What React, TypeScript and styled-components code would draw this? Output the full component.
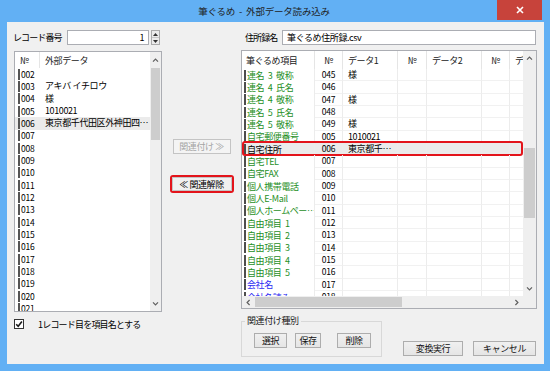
import React from "react";
import styled, { createGlobalStyle, css } from "styled-components";

const GlobalStyle = createGlobalStyle`
  html, body { margin: 0; padding: 0; background: #ffffff; }
  body {
    font-family: "Noto Sans CJK JP", "Noto Sans", "Liberation Sans", sans-serif;
    font-size: 9px;
    letter-spacing: -0.4px;
    color: #000;
  }
  * { box-sizing: border-box; }
`;

/* ---------- window frame ---------- */
const Window = styled.div`
  width: 550px;
  height: 371px;
  background: #62b0f4;
  display: flex;
  flex-direction: column;
`;

const TitleBar = styled.div`
  height: 22px;
  flex: none;
  display: grid;
  grid-template-columns: 1fr auto 1fr;
  align-items: start;
`;

const Title = styled.div`
  grid-column: 2;
  height: 22px;
  line-height: 22px;
  font-size: 9.5px;
  letter-spacing: -0.2px;
  word-spacing: 2px;
  color: #1e1e1e;
  white-space: nowrap;
  margin-right: 22px;
`;

const CloseButton = styled.div`
  grid-column: 3;
  justify-self: end;
  margin-right: 8px;
  width: 45px;
  height: 20px;
  background: #c7433b;
  display: flex;
  align-items: center;
  justify-content: center;
`;

const Client = styled.div`
  flex: 1;
  margin: 0 6px 7px 7px;
  background: #f0f0f0;
  display: flex;
  padding: 8px 0 0 7px;
`;

/* ---------- shared controls ---------- */
const TopRow = styled.div`
  height: 15px;
  display: flex;
  align-items: center;
`;

const Label = styled.div<{ $w: number; $ml?: number }>`
  width: ${(p) => p.$w}px;
  margin-left: ${(p) => p.$ml ?? 0}px;
  white-space: nowrap;
  letter-spacing: -0.9px;
`;

const TextBox = styled.div<{ $w: number; $right?: boolean }>`
  width: ${(p) => p.$w}px;
  height: 15px;
  border: 1px solid #abadb3;
  background: #fff;
  line-height: 13px;
  padding: 0 4px;
  text-align: ${(p) => (p.$right ? "right" : "left")};
  white-space: nowrap;
`;

const Spinner = styled.div`
  margin-left: 2px;
  width: 9px;
  height: 15px;
  border: 1px solid #acacac;
  background: #ececec;
  display: flex;
  flex-direction: column;
`;

const SpinHalf = styled.div<{ $bottom?: boolean }>`
  flex: 1;
  display: flex;
  align-items: center;
  justify-content: center;
  ${(p) => p.$bottom && css`border-top: 1px solid #c8c8c8;`}
`;

const Tri = styled.svg<{ $down?: boolean }>`
  transform: rotate(${(p) => (p.$down ? 180 : 0)}deg);
`;

const ChevronSvg = styled.svg<{ $rot: number }>`
  transform: rotate(${(p) => p.$rot}deg);
`;

type Dir = "up" | "down" | "left" | "right";
const rotations: Record<Dir, number> = { up: 0, right: 90, down: 180, left: 270 };

const Chevron = ({ dir }: { dir: Dir }) => (
  <ChevronSvg $rot={rotations[dir]} width="7" height="7" viewBox="0 0 7 7">
    <path d="M1 4.6 L3.5 2.1 L6 4.6" fill="none" stroke="#606060" strokeWidth="1.2" />
  </ChevronSvg>
);

const PushButton = styled.div<{ $w: number; $ml?: number }>`
  width: ${(p) => p.$w}px;
  height: 15px;
  margin-left: ${(p) => p.$ml ?? 0}px;
  border: 1px solid #adadad;
  background: linear-gradient(#f0f0f0, #e5e5e5);
  display: flex;
  align-items: center;
  justify-content: center;
  white-space: nowrap;
  color: #111;
`;

/* ---------- scrollbars ---------- */
const VScroll = styled.div`
  background: #efefef;
  display: flex;
  flex-direction: column;
  overflow: hidden;
`;

const ArrowCell = styled.div<{ $h?: number; $w?: number }>`
  flex: none;
  height: ${(p) => (p.$h ? `${p.$h}px` : "auto")};
  width: ${(p) => (p.$w ? `${p.$w}px` : "auto")};
  display: flex;
  align-items: center;
  justify-content: center;
`;

const VTrack = styled.div`
  flex: 1;
  display: flex;
  flex-direction: column;
`;

const VThumb = styled.div<{ $top: number; $h: number }>`
  margin: ${(p) => p.$top}px 1px 0 1px;
  height: ${(p) => p.$h}px;
  background: #cdcdcd;
`;

const HScroll = styled.div`
  background: #efefef;
  display: flex;
  align-items: stretch;
`;

const HTrack = styled.div`
  flex: 1;
  display: flex;
  align-items: center;
`;

const HThumb = styled.div<{ $left: number; $w: number }>`
  margin-left: ${(p) => p.$left}px;
  width: ${(p) => p.$w}px;
  height: 10px;
  background: #cdcdcd;
`;

/* ---------- left pane ---------- */
const LeftPane = styled.div`
  width: 148px;
  display: flex;
  flex-direction: column;
`;

const ListBox = styled.div`
  margin-top: 6px;
  height: 261px;
  border: 1px solid #abadb3;
  background: #fff;
  display: grid;
  grid-template-columns: 1fr 11px;
  overflow: hidden;
`;

const ListMain = styled.div`
  display: flex;
  flex-direction: column;
  overflow: hidden;
`;

const ListHeader = styled.div`
  height: 16px;
  flex: none;
  display: grid;
  grid-template-columns: 25px 1fr;
  align-items: stretch;
`;

const HeadCell = styled.div<{ $pl: number; $divider?: boolean; $center?: boolean }>`
  display: flex;
  align-items: center;
  justify-content: ${(p) => (p.$center ? "center" : "flex-start")};
  padding-left: ${(p) => p.$pl}px;
  white-space: nowrap;
  overflow: hidden;
  color: #222;
  ${(p) => p.$divider && css`border-right: 1px solid #e5e5e5;`}
`;

const LeftRow = styled.div<{ $selected?: boolean }>`
  height: 12.33px;
  flex: none;
  display: grid;
  grid-template-columns: 25px 1fr;
  align-items: center;
  background: ${(p) => (p.$selected ? "#ebebeb" : "transparent")};
`;

const MarkedCell = styled.div<{ $ml: number }>`
  margin-left: ${(p) => p.$ml}px;
  height: 11px;
  border-left: 2px solid #555;
  padding-left: 1px;
  line-height: 11px;
  font-size: 8.5px;
  letter-spacing: -0.2px;
  white-space: nowrap;
  overflow: hidden;
`;

const DataCell = styled.div`
  padding-left: 5px;
  line-height: 12px;
  white-space: nowrap;
  overflow: hidden;
`;

const CheckRow = styled.div`
  margin-top: 7px;
  height: 10px;
  display: flex;
  align-items: center;
`;

const CheckBox = styled.div`
  width: 10px;
  height: 10px;
  border: 1px solid #333;
  background: #fff;
  display: flex;
  align-items: center;
  justify-content: center;
`;

const CheckLabel = styled.div`
  margin-left: 14px;
  white-space: nowrap;
  letter-spacing: -0.8px;
`;

/* ---------- middle pane ---------- */
const MiddlePane = styled.div`
  width: 79px;
  display: flex;
  flex-direction: column;
  align-items: center;
  padding-top: 109px;
`;

const DisabledButton = styled.div`
  width: 58px;
  height: 15px;
  border: 1px solid #c4c4c4;
  background: #f4f4f4;
  color: #a5a5a5;
  display: flex;
  align-items: center;
  justify-content: center;
  white-space: nowrap;
`;

const RedFrame = styled.div`
  margin-top: 21px;
  width: 64px;
  height: 18px;
  border: 2px solid #e3141b;
  border-radius: 3px;
  display: flex;
`;

const FramedButton = styled.div`
  flex: 1;
  border: 1px solid #c4c4c4;
  background: #f0f0f0;
  display: flex;
  align-items: center;
  justify-content: center;
  white-space: nowrap;
`;

/* ---------- right pane ---------- */
const RightPane = styled.div`
  width: 296px;
  display: flex;
  flex-direction: column;
`;

const GridBox = styled.div`
  margin-top: 5px;
  height: 259px;
  border: 1px solid #abadb3;
  background: #fff;
  display: grid;
  grid-template-columns: 1fr 13px;
  grid-template-rows: 1fr 12px;
  overflow: hidden;
`;

const GridContent = styled.div`
  overflow: hidden;
  display: flex;
  flex-direction: column;
`;

const gridCols = css`
  display: grid;
  grid-template-columns: 73px 28px 55px 29px 55px 28px 60px;
`;

const GridHeader = styled.div`
  ${gridCols};
  height: 18px;
  flex: none;
`;

type Kind = "green" | "blue" | "black";
const kindColor: Record<Kind, string> = {
  green: "#1f8f1f",
  blue: "#2b2bf2",
  black: "#000",
};

const GridRow = styled.div<{ $selected?: boolean }>`
  ${gridCols};
  height: 12.33px;
  flex: none;
  position: relative;
  background: ${(p) => (p.$selected ? "#ebebeb" : "transparent")};
  ${(p) =>
    p.$selected &&
    css`
      &::after {
        content: "";
        position: absolute;
        left: 0;
        right: 0;
        top: -2px;
        bottom: -1px;
        border: 2px solid #e3141b;
        border-radius: 3px;
      }
    `}
`;

const GCell = styled.div<{ $center?: boolean; $pl?: number }>`
  border-right: 1px solid #ececec;
  border-bottom: 1px solid #f1f1f1;
  padding-left: ${(p) => p.$pl ?? 5}px;
  display: flex;
  align-items: center;
  justify-content: ${(p) => (p.$center ? "center" : "flex-start")};
  white-space: nowrap;
  overflow: hidden;
  line-height: 11px;
`;

const NumText = styled.span`
  font-size: 8.5px;
  letter-spacing: -0.2px;
`;

const NameCell = styled.div<{ $kind: Kind }>`
  border-right: 1px solid #ececec;
  display: flex;
  align-items: center;
  overflow: hidden;
  white-space: nowrap;
  color: ${(p) => kindColor[p.$kind]};
`;

const NameMark = styled.div`
  margin-left: 2px;
  height: 11px;
  border-left: 2px solid #4d4d4d;
  padding-left: 1px;
  line-height: 11px;
  word-spacing: 2px;
`;

const Corner = styled.div`
  background: #efefef;
`;

const BottomRow = styled.div`
  margin-top: 6px;
  display: flex;
  align-items: flex-end;
  justify-content: space-between;
`;

const GroupBox = styled.fieldset`
  width: 141px;
  margin: 0;
  border: 1px solid #d8d8d8;
  padding: 0 8px 8px 12px;
  display: flex;
  align-items: center;
`;

const GroupLegend = styled.legend`
  margin-left: -9px;
  padding: 0 2px;
  line-height: 12px;
  font-size: 9px;
  color: #222;
`;

const GroupButtons = styled.div`
  margin-top: 6px;
  display: flex;
`;

const ActionButtons = styled.div`
  display: flex;
  margin: 0 1px 1px 0;
`;

/* ---------- data ---------- */
const leftRows: { no: string; data: string; selected?: boolean }[] = [
  { no: "002", data: "" },
  { no: "003", data: "アキバ イチロウ" },
  { no: "004", data: "様" },
  { no: "005", data: "1010021" },
  { no: "006", data: "東京都千代田区外神田四…", selected: true },
  ...Array.from({ length: 15 }, (_, i) => ({
    no: String(7 + i).padStart(3, "0"),
    data: "",
  })),
];

const rightRows: { name: string; no: string; d1?: string; kind?: Kind; selected?: boolean }[] = [
  { name: "連名 3 敬称", no: "045", d1: "様" },
  { name: "連名 4 氏名", no: "046" },
  { name: "連名 4 敬称", no: "047", d1: "様" },
  { name: "連名 5 氏名", no: "048" },
  { name: "連名 5 敬称", no: "049", d1: "様" },
  { name: "自宅郵便番号", no: "005", d1: "1010021" },
  { name: "自宅住所", no: "006", d1: "東京都千…", kind: "black", selected: true },
  { name: "自宅TEL", no: "007" },
  { name: "自宅FAX", no: "008" },
  { name: "個人携帯電話", no: "009" },
  { name: "個人E-Mail", no: "010" },
  { name: "個人ホームペー…", no: "011" },
  { name: "自由項目 1", no: "012" },
  { name: "自由項目 2", no: "013" },
  { name: "自由項目 3", no: "014" },
  { name: "自由項目 4", no: "015" },
  { name: "自由項目 5", no: "016" },
  { name: "会社名", no: "017", kind: "blue" },
  { name: "会社名読み", no: "018", kind: "blue" },
];

const CloseIcon = () => (
  <svg width="8" height="8" viewBox="0 0 8 8">
    <path d="M1 1 L7 7 M7 1 L1 7" stroke="#fff" strokeWidth="1.6" />
  </svg>
);

const CheckMark = () => (
  <svg width="8" height="8" viewBox="0 0 8 8">
    <path d="M1.2 4.2 L3.2 6.2 L6.9 1.6" fill="none" stroke="#1a1a1a" strokeWidth="1.6" />
  </svg>
);

const SpinTri = ({ down }: { down?: boolean }) => (
  <Tri $down={down} width="5" height="3" viewBox="0 0 5 3">
    <path d="M0 3 L2.5 0 L5 3 Z" fill="#333" />
  </Tri>
);

export default function App() {
  return (
    <>
      <GlobalStyle />
      <Window>
        <TitleBar>
          <Title>筆ぐるめ - 外部データ読み込み</Title>
          <CloseButton>
            <CloseIcon />
          </CloseButton>
        </TitleBar>
        <Client>
          <LeftPane>
            <TopRow>
              <Label $w={54} $ml={-1}>
                レコード番号
              </Label>
              <TextBox $w={82} $right>
                1
              </TextBox>
              <Spinner>
                <SpinHalf>
                  <SpinTri />
                </SpinHalf>
                <SpinHalf $bottom>
                  <SpinTri down />
                </SpinHalf>
              </Spinner>
            </TopRow>
            <ListBox>
              <ListMain>
                <ListHeader>
                  <HeadCell $pl={5} $divider>
                    №
                  </HeadCell>
                  <HeadCell $pl={5}>外部データ</HeadCell>
                </ListHeader>
                {leftRows.map((r) => (
                  <LeftRow key={r.no} $selected={r.selected}>
                    <MarkedCell $ml={3}>{r.no}</MarkedCell>
                    <DataCell>{r.data}</DataCell>
                  </LeftRow>
                ))}
              </ListMain>
              <VScroll>
                <ArrowCell $h={16}>
                  <Chevron dir="up" />
                </ArrowCell>
                <VTrack>
                  <VThumb $top={0} $h={72} />
                </VTrack>
                <ArrowCell $h={15}>
                  <Chevron dir="down" />
                </ArrowCell>
              </VScroll>
            </ListBox>
            <CheckRow>
              <CheckBox>
                <CheckMark />
              </CheckBox>
              <CheckLabel>1レコード目を項目名とする</CheckLabel>
            </CheckRow>
          </LeftPane>

          <MiddlePane>
            <DisabledButton>関連付け ≫</DisabledButton>
            <RedFrame>
              <FramedButton>≪ 関連解除</FramedButton>
            </RedFrame>
          </MiddlePane>

          <RightPane>
            <TopRow>
              <Label $w={37} $ml={4}>
                住所録名
              </Label>
              <TextBox $w={254}>筆ぐるめ住所録.csv</TextBox>
            </TopRow>
            <GridBox>
              <GridContent>
                <GridHeader>
                  <HeadCell $pl={4} $divider>
                    筆ぐるめ項目
                  </HeadCell>
                  <HeadCell $pl={0} $divider $center>
                    №
                  </HeadCell>
                  <HeadCell $pl={5} $divider>
                    データ1
                  </HeadCell>
                  <HeadCell $pl={0} $divider $center>
                    №
                  </HeadCell>
                  <HeadCell $pl={5} $divider>
                    データ2
                  </HeadCell>
                  <HeadCell $pl={0} $divider $center>
                    №
                  </HeadCell>
                  <HeadCell $pl={5}>データ3</HeadCell>
                </GridHeader>
                {rightRows.map((r) => (
                  <GridRow key={r.no} $selected={r.selected}>
                    <NameCell $kind={r.kind ?? "green"}>
                      <NameMark>{r.name}</NameMark>
                    </NameCell>
                    <GCell $center $pl={0}>
                      <NumText>{r.no}</NumText>
                    </GCell>
                    <GCell>{r.d1 ?? ""}</GCell>
                    <GCell />
                    <GCell />
                    <GCell />
                    <GCell />
                  </GridRow>
                ))}
              </GridContent>
              <VScroll>
                <ArrowCell $h={15}>
                  <Chevron dir="up" />
                </ArrowCell>
                <VTrack>
                  <VThumb $top={82} $h={70} />
                </VTrack>
                <ArrowCell $h={15}>
                  <Chevron dir="down" />
                </ArrowCell>
              </VScroll>
              <HScroll>
                <ArrowCell $w={12}>
                  <Chevron dir="left" />
                </ArrowCell>
                <HTrack>
                  <HThumb $left={1} $w={147} />
                </HTrack>
                <ArrowCell $w={14}>
                  <Chevron dir="right" />
                </ArrowCell>
              </HScroll>
              <Corner />
            </GridBox>
            <BottomRow>
              <GroupBox>
                <GroupLegend>関連付け種別</GroupLegend>
                <GroupButtons>
                  <PushButton $w={33}>選択</PushButton>
                  <PushButton $w={26} $ml={8}>
                    保存
                  </PushButton>
                  <PushButton $w={34} $ml={16}>
                    削除
                  </PushButton>
                </GroupButtons>
              </GroupBox>
              <ActionButtons>
                <PushButton $w={60}>変換実行</PushButton>
                <PushButton $w={63} $ml={10}>
                  キャンセル
                </PushButton>
              </ActionButtons>
            </BottomRow>
          </RightPane>
        </Client>
      </Window>
    </>
  );
}
